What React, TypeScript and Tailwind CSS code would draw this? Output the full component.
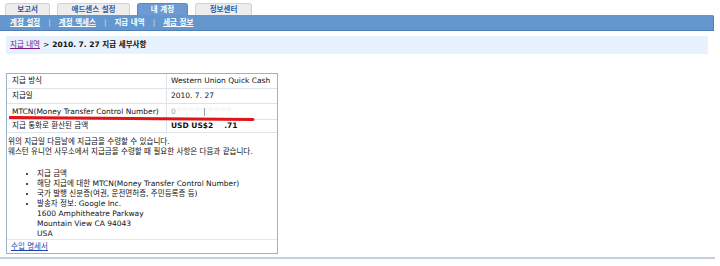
const tabs = [
  { label: "보고서", w: "w-[45px]" },
  { label: "애드센스 설정", w: "w-[73px]" },
  { label: "내 계정", w: "w-[51px]", active: true },
  { label: "정보센터", w: "w-[57px]" },
];

const subLinks = ["계정 설정", "계정 액세스", "지급 내역", "세금 정보"];

const rows = [
  { label: "지급 방식", value: <span>Western Union Quick Cash</span>, h: "h-[15px]" },
  { label: "지급일", value: <span>2010. 7. 27</span>, h: "h-[15px]" },
  {
    label: "MTCN(Money Transfer Control Number)",
    value: (
      <span className="relative text-gray-400">
        0
        <span className="blur-[0.8px] text-gray-300">^^^^^^^^^</span>
        <span className="absolute left-[33px] top-[1px] h-[8px] w-px bg-gray-400" />
      </span>
    ),
    h: "h-[16px]",
  },
  {
    label: "지급 통화로 환산된 금액",
    value: (
      <span className="font-bold">
        USD US$2<span className="ml-[11px]">.71</span>
      </span>
    ),
    h: "h-[13px]",
  },
];

const App = () => {
  return (
    <div className="relative w-[720px] h-[266px] bg-white text-[7.5px] leading-[10px] text-[#111] font-['DejaVu_Sans','Noto_Sans_CJK_KR',sans-serif]">
      {/* tabs */}
      <div className="flex gap-[7px] pl-[5px] pt-[3px] h-[15px]">
        {tabs.map((t) => (
          <div
            key={t.label}
            className={`${t.w} h-[12px] flex items-center justify-center rounded-t-[3px] font-bold ${
              t.active
                ? "bg-[#6b9bd2] text-white border border-b-0 border-[#5a88c0]"
                : "bg-[#ededed] text-[#2b5ba8] border border-b-0 border-[#d2d2d2]"
            }`}
          >
            {t.label}
          </div>
        ))}
      </div>

      {/* sub nav */}
      <div className="w-[714px] h-[16px] bg-[#6497cd] border-b border-[#4f7fb5] border-r rounded-tr-[2px] flex items-center pl-[10px] text-white">
        {subLinks.map((l, i) => (
          <div key={l} className="flex items-center">
            {i > 0 && <span className="mx-[8px] text-[#cfe0f3]">|</span>}
            <span className={l === "지급 내역" ? "font-bold" : "underline font-bold"}>{l}</span>
          </div>
        ))}
      </div>

      {/* breadcrumb */}
      <div className="ml-[6px] mt-[5px] w-[702px] h-[18px] bg-[#e8f2fd] flex items-center pl-[4px]">
        <span className="underline text-[#7a1b8c]">지급 내역</span>
        <span className="mx-[3px]">&gt;</span>
        <span className="font-bold">2010. 7. 27 지급 세부사항</span>
      </div>

      {/* detail box */}
      <div className="ml-[6px] mt-[19px] w-[272px] h-[181px] border border-[#9eb3c8] flex flex-col">
        <div className="grid grid-cols-[160px_1fr]">
          {rows.map((r) => (
            <div key={r.label} className="contents">
              <div className={`${r.h} flex items-center pl-[5px] border-b border-r border-[#dde3ea] whitespace-nowrap`}>
                {r.label}
              </div>
              <div className={`${r.h} flex items-center pl-[4px] border-b border-[#dde3ea] whitespace-nowrap`}>
                {r.value}
              </div>
            </div>
          ))}
        </div>

        <div className="pl-[1px] pt-[4px]">
          <p>위의 지급일 다음날에 지급금을 수령할 수 있습니다.</p>
          <p>웨스턴 유니언 사무소에서 지급금을 수령할 때 필요한 사항은 다음과 같습니다.</p>
          <ul className="mt-[12px] pl-[29px] list-disc">
            <li>지급 금액</li>
            <li>해당 지급에 대한 MTCN(Money Transfer Control Number)</li>
            <li>국가 발행 신분증(여권, 운전면허증, 주민등록증 등)</li>
            <li>
              발송자 정보: Google Inc.
              <br />
              1600 Amphitheatre Parkway
              <br />
              Mountain View CA 94043
              <br />
              USA
            </li>
          </ul>
        </div>

        <div className="mt-auto h-[15px] border-t border-[#e4e9ef] flex items-center pl-[4px]">
          <span className="underline text-[#1a3fb0]">수입 명세서</span>
        </div>
      </div>

      <div className="mt-[3px] w-[715px] h-[2px] bg-[#c5d0db]" />

      {/* red marker line drawn over the table */}
      <svg className="absolute left-[9px] top-[115px]" width="246" height="7" viewBox="0 0 246 7">
        <path d="M1 2.5 Q120 3 244 4.5" stroke="#e0141a" strokeWidth="3" fill="none" strokeLinecap="round" />
      </svg>
    </div>
  );
};

export default App;
